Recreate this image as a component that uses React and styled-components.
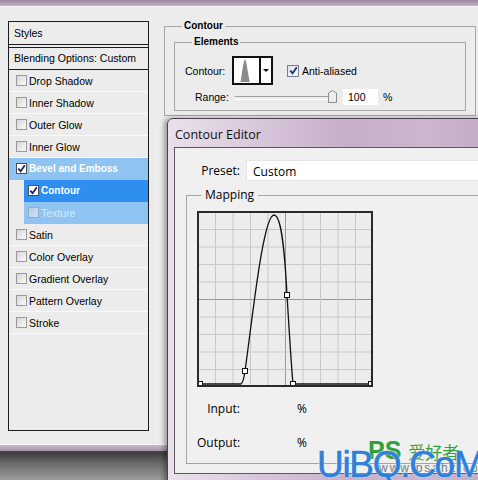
import styled, { createGlobalStyle } from "styled-components";

const GlobalStyle = createGlobalStyle`
  html, body {
    margin: 0;
    padding: 0;
    background: #ebebeb;
  }
  * {
    box-sizing: border-box;
  }
`;

const Root = styled.div`
  position: relative;
  width: 478px;
  height: 480px;
  overflow: hidden;
  background: #ebebeb;
  font-family: "Liberation Sans", Arial, sans-serif;
  color: #000;
`;

const BackWindow = styled.div`
  display: flex;
  flex-direction: column;
  height: 480px;
`;

const TopFrame = styled.div`
  height: 7px;
  background: linear-gradient(to bottom, #9a889e, #c3b3c6);
  border-bottom: 1px solid #f7f5f7;
`;

const BackBody = styled.div`
  display: flex;
  align-items: flex-start;
  height: 437px;
  background: #ececec;
`;

const BottomFrame = styled.div`
  height: 8px;
  border-top: 1px solid #f4f2f4;
  background: linear-gradient(to bottom, #c9bccb, #a593a8);
  border-bottom: 1px solid #4a4250;
`;

const Desktop = styled.div`
  flex: 1;
  background: linear-gradient(to bottom, #3c3c3c, #6a6a6a 40%, #9c9c9c);
`;

/* ---------- left styles list ---------- */

const StylesList = styled.div`
  margin: 14px 0 0 8px;
  width: 141px;
  height: 410px;
  border: 1px solid #1c1c1c;
  background: #ececec;
  display: flex;
  flex-direction: column;
  font-size: 10.5px;
`;

const ListHeader = styled.div`
  height: ${(p) => (p.$double ? "26px" : "22px")};
  line-height: ${(p) => (p.$double ? "22px" : "20px")};
  padding-left: 5px;
  border-bottom: ${(p) => (p.$double ? "4px double #1c1c1c" : "1px solid #1c1c1c")};
`;

const variants = {
  plain: { bg: "transparent", color: "#000", weight: 400, indent: 0 },
  parent: { bg: "#8fc3f1", color: "#fff", weight: 700, indent: 0 },
  active: { bg: "#2f8ff0", color: "#fff", weight: 700, indent: 15 },
  child: { bg: "#8fc3f1", color: "#d9eafa", weight: 400, indent: 15 },
};

const StyleRow = styled.div`
  display: flex;
  align-items: center;
  gap: 2px;
  height: 22px;
  margin-left: ${(p) => variants[p.$variant].indent}px;
  padding-left: ${(p) => (variants[p.$variant].indent ? 4 : 7)}px;
  background: ${(p) => variants[p.$variant].bg};
  color: ${(p) => variants[p.$variant].color};
  font-weight: ${(p) => variants[p.$variant].weight};
  font-size: ${(p) => (variants[p.$variant].weight === 700 ? "10px" : "10.5px")};
  border-bottom: 1px solid
    ${(p) => (p.$variant === "plain" ? "#fafafa" : "transparent")};
`;

const Box = styled.span`
  display: inline-flex;
  align-items: center;
  justify-content: center;
  width: 11px;
  height: 11px;
  flex: none;
  border: 1px solid ${(p) => (p.$checked ? "#505050" : "#9a9a9a")};
  background: ${(p) =>
    p.$checked ? "#fff" : "linear-gradient(135deg, #d6d6d6, #fbfbfb)"};
  opacity: ${(p) => (p.$faded ? 0.55 : 1)};
`;

const Check = ({ color = "#2a2260" }) => (
  <svg width="9" height="9" viewBox="0 0 9 9">
    <path d="M1.3 4.6 L3.6 7.2 L7.8 1.2" fill="none" stroke={color} strokeWidth="1.8" />
  </svg>
);

const CheckBox = ({ checked, faded }) => (
  <Box $checked={checked} $faded={faded}>
    {checked && <Check />}
  </Box>
);

const rows = [
  { label: "Drop Shadow", variant: "plain" },
  { label: "Inner Shadow", variant: "plain" },
  { label: "Outer Glow", variant: "plain" },
  { label: "Inner Glow", variant: "plain" },
  { label: "Bevel and Emboss", variant: "parent", checked: true },
  { label: "Contour", variant: "active", checked: true },
  { label: "Texture", variant: "child" },
  { label: "Satin", variant: "plain" },
  { label: "Color Overlay", variant: "plain" },
  { label: "Gradient Overlay", variant: "plain" },
  { label: "Pattern Overlay", variant: "plain" },
  { label: "Stroke", variant: "plain" },
];

/* ---------- right contour settings ---------- */

const RightPanel = styled.div`
  margin: 13px 0 0 15px;
  width: 312px;
`;

const Group = styled.fieldset`
  margin: ${(p) => (p.$inner ? "4px 0 0" : "0")};
  padding: ${(p) => (p.$inner ? "8px 9px 5px" : "0 9px 4px")};
  border: 1px solid #a6a6a6;
  min-width: 0;
`;

const GroupTitle = styled.legend`
  margin-left: 8px;
  padding: 0 2px;
  font-size: 10px;
  line-height: 12px;
  font-weight: 700;
`;

const ControlRow = styled.div`
  display: flex;
  align-items: center;
  height: ${(p) => p.$h}px;
  margin-top: ${(p) => p.$mt || 0}px;
  font-size: 10.5px;
`;

const Label = styled.span`
  width: ${(p) => p.$w}px;
  padding-left: ${(p) => p.$pl || 0}px;
  flex: none;
`;

const ContourThumb = styled.div`
  display: flex;
  width: 41px;
  height: 29px;
  border: 2px solid #111;
  background: #fff;
`;

const ThumbPreview = styled.div`
  width: 27px;
  border-right: 2px solid #111;
  display: flex;
  align-items: flex-end;
`;

const ThumbArrow = styled.div`
  flex: 1;
  display: flex;
  align-items: center;
  justify-content: center;
  &::after {
    content: "";
    border-left: 3px solid transparent;
    border-right: 3px solid transparent;
    border-top: 3px solid #111;
  }
`;

const AntiBox = styled.span`
  display: inline-flex;
  align-items: center;
  justify-content: center;
  width: 12px;
  height: 12px;
  margin: 0 3px 0 14px;
  border: 1px solid #71809c;
  background: linear-gradient(135deg, #dde3ec, #fafbfd);
`;

const Slider = styled.div`
  position: relative;
  width: 98px;
  height: 16px;
  flex: none;
  &::before {
    content: "";
    position: absolute;
    left: 0;
    right: 0;
    top: 7px;
    height: 2px;
    border-top: 1px solid #a0a0a0;
    border-bottom: 1px solid #fff;
  }
`;

const SliderThumb = styled.svg`
  position: absolute;
  right: -4px;
  top: 1px;
`;

const NumberBox = styled.div`
  width: 35px;
  height: 16px;
  margin-left: 10px;
  padding-left: 5px;
  background: #fff;
  line-height: 16px;
  font-size: 10.5px;
`;

const Percent = styled.span`
  margin-left: 5px;
`;

/* ---------- contour editor window ---------- */

const EditorWindow = styled.div`
  position: absolute;
  left: 167px;
  top: 118px;
  width: 330px;
  height: 372px;
  padding: 0 0 7px 6px;
  border: 1px solid #4a4050;
  border-radius: 6px 6px 0 0;
  background: linear-gradient(
    to right,
    #e9e1ea 0%,
    #d9c9dc 25%,
    #c6afc9 55%,
    #ccb6ce 80%,
    #c2aac6 100%
  );
  box-shadow: -3px 0 5px rgba(0, 0, 0, 0.35);
  font-family: "Open Sans", "Noto Sans", sans-serif;
`;

const EditorTitle = styled.div`
  height: 28px;
  padding: 7px 0 0 1px;
  font-size: 12.5px;
  line-height: 17px;
  color: #111;
`;

const EditorBody = styled.div`
  height: 327px;
  border: 1px solid #5a5560;
  background: #f0f0f0;
  padding-top: 12px;
  font-size: 12px;
`;

const PresetRow = styled.div`
  display: flex;
  align-items: center;
  height: 21px;
`;

const RightLabel = styled.span`
  width: ${(p) => p.$w}px;
  flex: none;
  text-align: right;
`;

const PresetInput = styled.div`
  flex: 1;
  height: 21px;
  margin-left: 6px;
  padding-left: 6px;
  line-height: 21px;
  background: #fff;
  border: 1px solid #e4e4e4;
  border-right: none;
`;

const Mapping = styled.fieldset`
  margin: 6px 0 0 11px;
  padding: 8px 0 13px 10px;
  border: 1px solid #a3a3a3;
  border-right: none;
  min-width: 0;
`;

const MappingTitle = styled.legend`
  margin-left: 4px;
  padding: 0 4px;
  font-size: 12px;
  line-height: 16px;
`;

const GraphWrap = styled.div`
  width: 176px;
  height: 176px;
`;

const ValueRow = styled.div`
  display: flex;
  align-items: center;
  height: 16px;
  margin-top: ${(p) => p.$mt}px;
`;

const ValueUnit = styled.span`
  margin-left: 57px;
`;

/* ---------- watermark ---------- */

const Watermark = styled.div`
  position: absolute;
  left: 317px;
  top: 436px;
  width: 175px;
  height: 50px;
  pointer-events: none;
`;

const WmBrand = styled.div`
  position: absolute;
  left: 51px;
  top: 1px;
  display: flex;
  align-items: baseline;
  gap: 7px;
  color: #33a03c;
`;

const WmPs = styled.span`
  font-family: "Liberation Sans", Arial, sans-serif;
  font-weight: 700;
  font-size: 25px;
  line-height: 26px;
`;

const WmCjk = styled.span`
  font-family: "Noto Sans CJK SC", sans-serif;
  font-size: 17px;
  line-height: 22px;
`;

const WmUrl = styled.div`
  position: absolute;
  left: 62px;
  top: 25px;
  font-family: "Liberation Sans", Arial, sans-serif;
  font-size: 12px;
  letter-spacing: 2px;
  color: #7a7a7a;
`;

const WmLogo = styled.div`
  position: absolute;
  left: 0;
  top: 10px;
  font-family: "Liberation Sans", Arial, sans-serif;
  font-size: 37px;
  line-height: 37px;
  letter-spacing: -1.3px;
  color: #2f80d8;
  -webkit-text-stroke: 0.6px #2f80d8;
  text-shadow: 0 0 1px #fff, 0 0 2px #fff;
`;

function ContourGraph() {
  const step = 17.5;
  const lines = [];
  for (let i = 1; i < 10; i++) {
    const p = 1 + i * step;
    const c = i === 5 ? "#9a9a9a" : "#c8c8c8";
    lines.push(<line key={"v" + i} x1={p} y1="1" x2={p} y2="175" stroke={c} strokeWidth="1" />);
    lines.push(<line key={"h" + i} x1="1" y1={p} x2="175" y2={p} stroke={c} strokeWidth="1" />);
  }
  const points = [
    [3, 173],
    [48, 160],
    [90, 84],
    [96, 173],
    [174, 173],
  ];
  return (
    <svg width="176" height="176" viewBox="0 0 176 176">
      <rect x="0" y="0" width="176" height="176" fill="#ececec" />
      {lines}
      <path
        d="M3 173 L44 173 C46 172 47 167 48 160 C55 111 66 4 77 4 C85 4 88 46 90 84 C92 116 94 151 96 173 L174 173"
        fill="none"
        stroke="#111"
        strokeWidth="1.3"
      />
      {points.map(([x, y]) => (
        <rect key={x} x={x - 2.5} y={y - 2.5} width="5" height="5" fill="#fff" stroke="#111" strokeWidth="1" />
      ))}
      <rect x="1" y="1" width="174" height="174" fill="none" stroke="#2a2a2a" strokeWidth="2" />
    </svg>
  );
}

export default function App() {
  return (
    <Root>
      <GlobalStyle />
      <BackWindow>
        <TopFrame />
        <BackBody>
          <StylesList>
            <ListHeader $double>Styles</ListHeader>
            <ListHeader>Blending Options: Custom</ListHeader>
            {rows.map((r) => (
              <StyleRow key={r.label} $variant={r.variant}>
                <CheckBox checked={r.checked} faded={r.variant === "child"} />
                <span>{r.label}</span>
              </StyleRow>
            ))}
          </StylesList>

          <RightPanel>
            <Group>
              <GroupTitle>Contour</GroupTitle>
              <Group $inner>
                <GroupTitle>Elements</GroupTitle>
                <ControlRow $h={29}>
                  <Label $w={48} $pl={1}>Contour:</Label>
                  <ContourThumb>
                    <ThumbPreview>
                      <svg width="27" height="25" viewBox="0 0 27 25">
                        <polygon
                          points="7,25 8,19 9,12 10,6 11,2 12,0 13,3 14,8 15,14 16,20 17,25"
                          fill="#8a8a8a"
                        />
                      </svg>
                    </ThumbPreview>
                    <ThumbArrow />
                  </ContourThumb>
                  <AntiBox>
                    <Check color="#22306e" />
                  </AntiBox>
                  <span>Anti-aliased</span>
                </ControlRow>
                <ControlRow $h={16} $mt={4}>
                  <Label $w={51} $pl={11}>Range:</Label>
                  <Slider>
                    <SliderThumb width="9" height="13" viewBox="0 0 9 13">
                      <path
                        d="M0.5 3 L4.5 0.5 L8.5 3 L8.5 12.5 L0.5 12.5 Z"
                        fill="#eeeeee"
                        stroke="#8c8c8c"
                      />
                    </SliderThumb>
                  </Slider>
                  <NumberBox>100</NumberBox>
                  <Percent>%</Percent>
                </ControlRow>
              </Group>
            </Group>
          </RightPanel>
        </BackBody>
        <BottomFrame />
        <Desktop />
      </BackWindow>

      <EditorWindow>
        <EditorTitle>Contour Editor</EditorTitle>
        <EditorBody>
          <PresetRow>
            <RightLabel $w={65}>Preset:</RightLabel>
            <PresetInput>Custom</PresetInput>
          </PresetRow>
          <Mapping>
            <MappingTitle>Mapping</MappingTitle>
            <GraphWrap>
              <ContourGraph />
            </GraphWrap>
            <ValueRow $mt={13}>
              <RightLabel $w={43}>Input:</RightLabel>
              <ValueUnit>%</ValueUnit>
            </ValueRow>
            <ValueRow $mt={18}>
              <RightLabel $w={43}>Output:</RightLabel>
              <ValueUnit>%</ValueUnit>
            </ValueRow>
          </Mapping>
        </EditorBody>
      </EditorWindow>

      <Watermark>
        <WmBrand>
          <WmPs>PS</WmPs>
          <WmCjk>爱好者</WmCjk>
        </WmBrand>
        <WmUrl>www.psahz.com</WmUrl>
        <WmLogo>UiBQ.CoM</WmLogo>
      </Watermark>
    </Root>
  );
}
